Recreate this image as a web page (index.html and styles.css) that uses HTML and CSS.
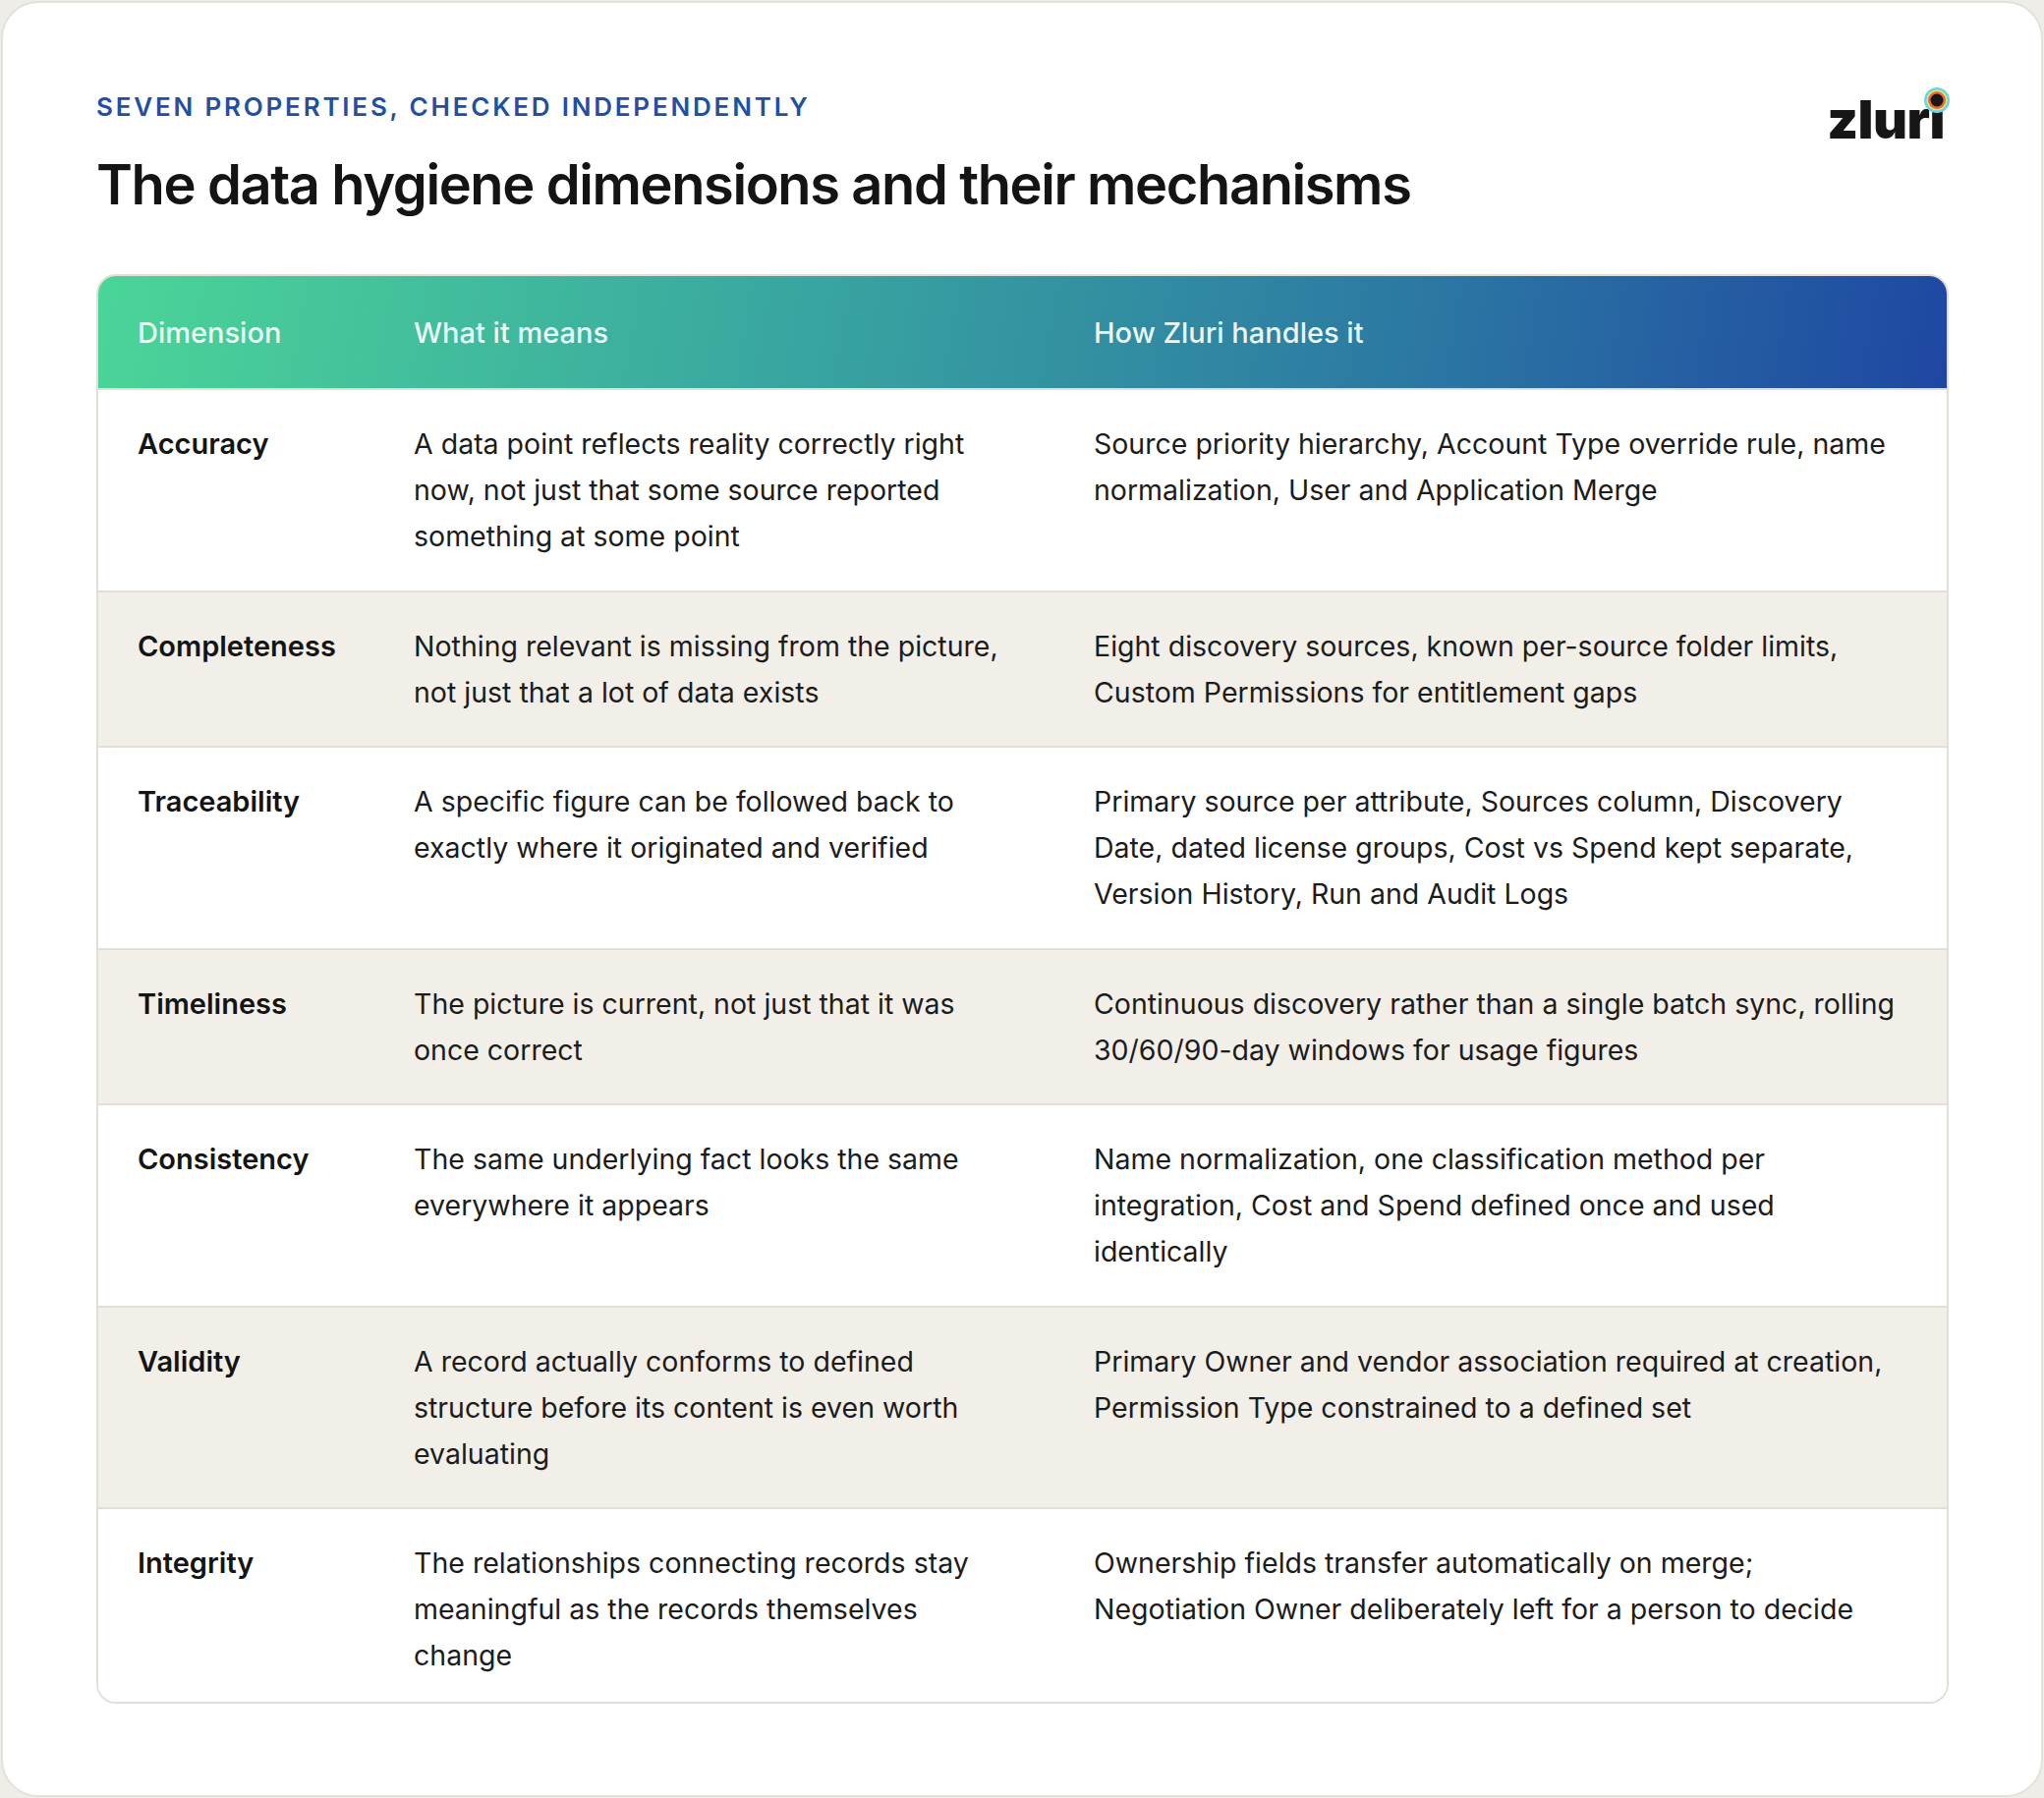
FILE: index.html
```html
<!DOCTYPE html>
<html lang="en">
<head>
<meta charset="utf-8">
<title>The data hygiene dimensions and their mechanisms</title>
<link rel="stylesheet" href="styles.css">
</head>
<body>
<div class="card">
  <header class="top">
    <div class="heading">
      <p class="eyebrow">Seven properties, checked independently</p>
      <h1 class="title">The data hygiene dimensions and their mechanisms</h1>
    </div>
    <div class="logo">zlur<span class="logo-i">ı<svg class="logo-dot" viewBox="0 0 26 26" width="26" height="26" aria-hidden="true"><circle cx="13" cy="13" r="13" fill="#6cd3ec"/><circle cx="13" cy="13" r="10.5" fill="#d7ec72"/><circle cx="13" cy="13" r="9" fill="#f0663c"/><circle cx="13" cy="13" r="6.5" fill="#181818"/></svg></span></div>
  </header>

  <div class="table">
    <div class="row head">
      <div class="cell">Dimension</div>
      <div class="cell">What it means</div>
      <div class="cell">How Zluri handles it</div>
    </div>
    <div class="row">
      <div class="cell dim">Accuracy</div>
      <div class="cell">A data point reflects reality correctly right now, not just that some source reported something at some point</div>
      <div class="cell">Source priority hierarchy, Account Type override rule, name normalization, User and Application Merge</div>
    </div>
    <div class="row alt">
      <div class="cell dim">Completeness</div>
      <div class="cell">Nothing relevant is missing from the picture, not just that a lot of data exists</div>
      <div class="cell">Eight discovery sources, known per-source folder limits, Custom Permissions for entitlement gaps</div>
    </div>
    <div class="row">
      <div class="cell dim">Traceability</div>
      <div class="cell">A specific figure can be followed back to exactly where it originated and verified</div>
      <div class="cell">Primary source per attribute, Sources column, Discovery Date, dated license groups, Cost vs Spend kept separate, Version History, Run and Audit Logs</div>
    </div>
    <div class="row alt">
      <div class="cell dim">Timeliness</div>
      <div class="cell">The picture is current, not just that it was once correct</div>
      <div class="cell">Continuous discovery rather than a single batch sync, rolling 30/60/90-day windows for usage figures</div>
    </div>
    <div class="row">
      <div class="cell dim">Consistency</div>
      <div class="cell">The same underlying fact looks the same everywhere it appears</div>
      <div class="cell">Name normalization, one classification method per integration, Cost and Spend defined once and used identically</div>
    </div>
    <div class="row alt">
      <div class="cell dim">Validity</div>
      <div class="cell">A record actually conforms to defined structure before its content is even worth evaluating</div>
      <div class="cell">Primary Owner and vendor association required at creation, Permission Type constrained to a defined set</div>
    </div>
    <div class="row last">
      <div class="cell dim">Integrity</div>
      <div class="cell">The relationships connecting records stay meaningful as the records themselves change</div>
      <div class="cell">Ownership fields transfer automatically on merge; Negotiation Owner deliberately left for a person to decide</div>
    </div>
  </div>
</div>
</body>
</html>
```

FILE: styles.css
```css
* { box-sizing: border-box; }

html, body {
  margin: 0;
  padding: 0;
  background: #eeede8;
}

body {
  font-family: Inter, "Noto Sans", "Liberation Sans", sans-serif;
  color: #1c1c1c;
}

.card {
  margin: 1px;
  height: 1828px;
  background: #ffffff;
  border: 2px solid #e4e1da;
  border-radius: 38px;
  padding: 90px 94px 0 95px;
}

.top {
  display: flex;
  justify-content: space-between;
  align-items: flex-start;
}

.eyebrow {
  margin: 0;
  font-size: 26px;
  line-height: 32px;
  font-weight: 600;
  letter-spacing: 2.8px;
  text-transform: uppercase;
  color: #2150a3;
}

.title {
  margin: 28px 0 0;
  font-size: 56px;
  line-height: 70px;
  font-weight: 600;
  letter-spacing: -0.025em;
  color: #141414;
}

.logo {
  margin-top: 2px;
  margin-right: 4px;
  font-size: 54px;
  line-height: 54px;
  font-weight: 900;
  letter-spacing: -0.5px;
  color: #161616;
}

.logo-i {
  position: relative;
  display: inline-block;
}

.logo-dot {
  position: absolute;
  left: 50%;
  top: -6px;
  transform: translateX(-50%);
}

.table {
  margin-top: 56px;
  border: 2px solid #e2dfd7;
  border-radius: 20px;
  overflow: hidden;
}

.row {
  display: grid;
  grid-template-columns: 281px 692px 1fr;
  padding: 31px 45px 31.5px 40px;
  font-size: 28.5px;
  line-height: 47px;
  background: #ffffff;
  border-top: 2px solid #e2dfd7;
}

.cell:nth-child(1) {
  padding-right: 80px;
}

.cell:nth-child(2) {
  padding-right: 87px;
}

.row.alt {
  background: #f2efe8;
}

.row.last {
  padding-bottom: 24px;
}

.row.head {
  border-top: 0;
  height: 114px;
  padding-top: 0;
  padding-bottom: 0;
  align-items: center;
  font-size: 29px;
  font-weight: 500;
  color: rgba(246, 255, 252, 0.95);
  background: linear-gradient(100deg, #4bd598 0%, #3aa9a0 35%, #2c7aa3 70%, #1f47a2 100%);
}

.cell.dim {
  font-size: 29px;
  font-weight: 600;
  color: #141414;
}
```
